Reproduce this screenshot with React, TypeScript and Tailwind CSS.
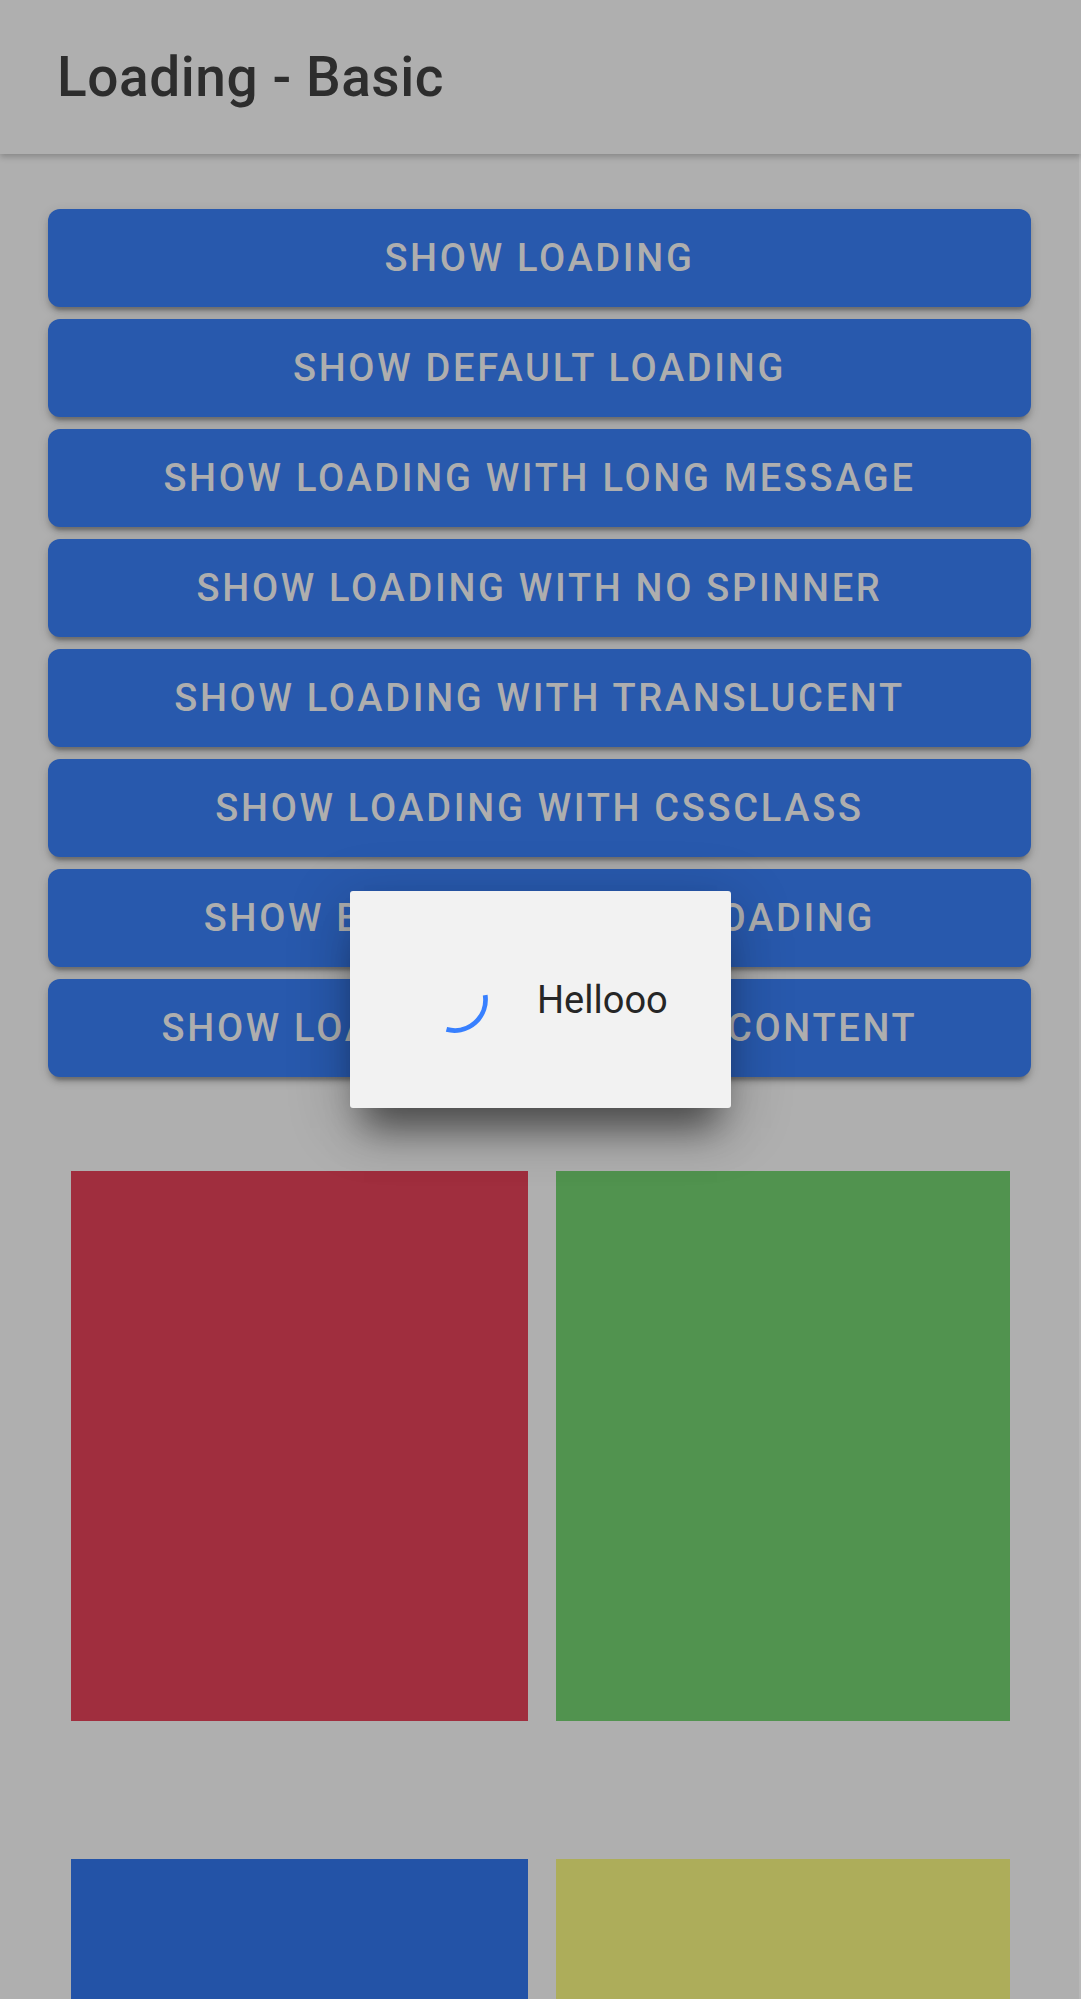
import React from "react";

const buttons = [
  "SHOW LOADING",
  "SHOW DEFAULT LOADING",
  "SHOW LOADING WITH LONG MESSAGE",
  "SHOW LOADING WITH NO SPINNER",
  "SHOW LOADING WITH TRANSLUCENT",
  "SHOW LOADING WITH CSSCLASS",
  "SHOW BACKDROP CLICK LOADING",
  "SHOW LOADING WITH HTML CONTENT",
];

export default function App() {
  return (
    <div
      className="relative w-[1081px] h-[1999px] overflow-hidden bg-[#afafaf]"
      style={{ fontFamily: "Roboto, 'Noto Sans', sans-serif" }}
    >
      {/* Header */}
      <div className="relative z-10 h-[154px] flex items-center px-[57px] bg-[#afafaf] shadow-[0_3px_6px_rgba(0,0,0,0.22)]">
        <h1 className="text-[55px] font-medium text-[#2d2d2d] tracking-[0.01em] leading-none">
          Loading - Basic
        </h1>
      </div>

      {/* Buttons */}
      <div className="flex flex-col gap-[12px] pt-[55px] pl-[48px] w-[1031px]">
        {buttons.map((b) => (
          <div
            key={b}
            className="h-[98px] rounded-[12px] bg-[#2859ad] flex items-center justify-center shadow-[0_8px_3px_-5px_rgba(0,0,0,0.2),0_5px_5px_0_rgba(0,0,0,0.14),0_3px_12px_0_rgba(0,0,0,0.12)]"
          >
            <span className="text-[38px] font-medium text-[#aeaeae] tracking-[2.7px] leading-none whitespace-nowrap">
              {b}
            </span>
          </div>
        ))}
      </div>

      {/* Color boxes */}
      <div className="grid grid-cols-[457px_454px] gap-x-[28px] gap-y-[138px] pl-[71px] mt-[94px]">
        <div className="h-[550px] bg-[#a02e3e]" />
        <div className="h-[550px] bg-[#51934f]" />
        <div className="h-[550px] bg-[#2353a7]" />
        <div className="h-[550px] bg-[#adad5a]" />
      </div>

      {/* Right edge strip */}
      <div className="absolute top-0 right-0 w-[2px] h-full bg-[#b8b8b8]" />

      {/* Loading overlay */}
      <div className="absolute inset-0 z-20 flex items-center justify-center">
        <div className="w-[381px] h-[217px] rounded-[3px] bg-[#f2f2f2] flex items-center pl-[66px] gap-[44px] shadow-[0_34px_36px_-14px_rgba(0,0,0,0.5),0_14px_60px_6px_rgba(0,0,0,0.18)]">
          <svg width="77" height="77" viewBox="0 0 77 77" className="shrink-0">
            <path
              d="M69.2 34.19 A31 31 0 0 1 30.48 68.44"
              fill="none"
              stroke="#3880ff"
              strokeWidth="4.8"
            />
          </svg>
          <span className="text-[38px] text-[#262626] leading-none">Hellooo</span>
        </div>
      </div>
    </div>
  );
}
